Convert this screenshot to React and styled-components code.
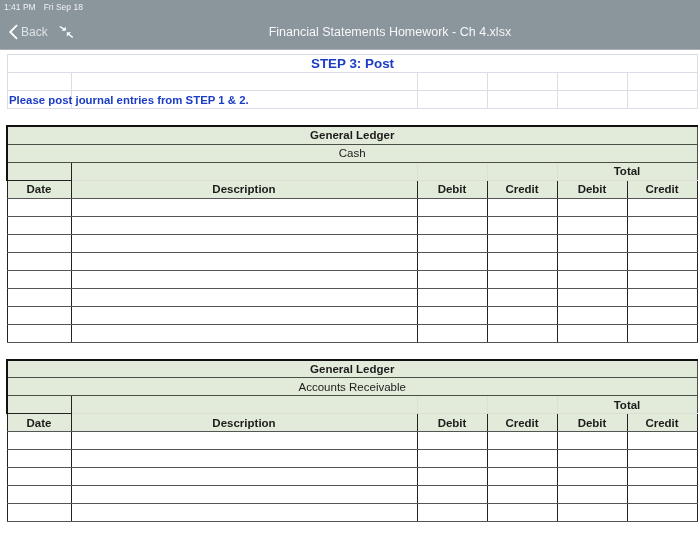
import React from 'react'
import styled, { createGlobalStyle } from 'styled-components'

const GlobalStyle = createGlobalStyle`
  html, body {
    margin: 0;
    padding: 0;
    background: #fff;
    font-family: 'Liberation Sans', Arial, sans-serif;
  }
`

const Page = styled.div`
  width: 700px;
  height: 534px;
  overflow: hidden;
  background: #fff;
  filter: blur(0.35px);
`
const Header = styled.header`
  height: 50px;
  background: #8b959c;
  border-bottom: 1px solid #a9b0b5;
  box-sizing: border-box;
  color: #fff;
`
const StatusBar = styled.div`
  height: 17px;
  padding: 1px 0 0 4px;
  box-sizing: border-box;
  font-size: 8.5px;
  line-height: 12px;
  color: #f1f3f4;
`
const StatusDate = styled.span`
  margin-left: 8px;
`
const NavBar = styled.div`
  display: flex;
  align-items: center;
  height: 30px;
  padding-left: 8px;
`
const BackLabel = styled.span`
  margin-left: 2px;
  font-size: 12px;
  color: #dfe3e5;
`
const Shrink = styled.svg`
  margin-left: 11px;
`
const Title = styled.div`
  margin-left: 195px;
  font-size: 12.5px;
  white-space: nowrap;
  color: #f6f7f8;
`
const Sheet = styled.main`
  padding: 4px 3px 0 6px;
`
const Grid = styled.table`
  width: 690px;
  table-layout: fixed;
  border-collapse: collapse;
  margin-left: ${(p) => (p.$ledger ? 0 : 1)}px;
  margin-bottom: ${(p) => p.$gap || 0}px;
  border-top: ${(p) => (p.$ledger ? '2px solid #111' : '1px solid #dcdde6')};
  tr {
    height: 18px;
  }
`
const Cell = styled.td`
  padding: 0;
  height: 18px;
  box-sizing: border-box;
  font-size: 11.5px;
  line-height: 14px;
  text-align: center;
  white-space: nowrap;
  color: #1c1c1c;
  border: 1px solid #dcdde6;
`
const NoteCell = styled(Cell)`
  padding-left: 1px;
  text-align: left;
  font-size: 11.4px;
  font-weight: bold;
  color: #1a3dc4;
`
const StepCell = styled(Cell)`
  font-size: 13.4px;
  font-weight: bold;
  color: #1a3dc4;
`
const BandCell = styled(Cell)`
  background: #e2ebd9;
  font-weight: ${(p) => (p.$bold ? 'bold' : 'normal')};
  border: 1px solid #4a4f48;
  border-left: ${(p) => (p.$thick ? '2px solid #111' : '1px solid #4a4f48')};
`
const SpacerCell = styled(Cell)`
  background: #e2ebd9;
  font-weight: bold;
  border: 1px solid #dcdfd8;
  border-top: 1px solid #4a4f48;
  border-left-color: ${(p) => (p.$darkLeft ? '#222' : '#dcdfd8')};
  border-right-color: ${(p) => (p.$end ? '#4a4f48' : '#dcdfd8')};
`
const CornerCell = styled(Cell)`
  background: #e2ebd9;
  border: 1px solid #222;
  border-left: 2px solid #111;
`
const HeadCell = styled(Cell)`
  background: #e2ebd9;
  font-weight: bold;
  border: 1px solid #222;
  border-bottom: 1px solid #555;
  border-top-color: ${(p) => (p.$lightTop ? '#dcdfd8' : '#222')};
`
const BodyCell = styled(Cell)`
  border: 1px solid #222;
  border-top-color: #555;
  border-bottom-color: #555;
`

const columns = [64, 346, 70, 70, 70, 70]

const Columns = () => (
  <colgroup>
    {columns.map((w, i) => (
      <col key={i} width={w} />
    ))}
  </colgroup>
)

const Ledger = ({ account, rows, gap }) => (
  <Grid $ledger $gap={gap}>
    <Columns />
    <tbody>
      <tr>
        <BandCell colSpan={6} $bold $thick>General Ledger</BandCell>
      </tr>
      <tr>
        <BandCell colSpan={6} $thick>{account}</BandCell>
      </tr>
      <tr>
        <CornerCell />
        <SpacerCell $darkLeft />
        <SpacerCell />
        <SpacerCell />
        <SpacerCell colSpan={2} $end>Total</SpacerCell>
      </tr>
      <tr>
        <HeadCell>Date</HeadCell>
        <HeadCell $lightTop>Description</HeadCell>
        <HeadCell $lightTop>Debit</HeadCell>
        <HeadCell $lightTop>Credit</HeadCell>
        <HeadCell $lightTop>Debit</HeadCell>
        <HeadCell $lightTop>Credit</HeadCell>
      </tr>
      {Array.from({ length: rows }).map((_, r) => (
        <tr key={r}>
          {columns.map((_, c) => (
            <BodyCell key={c} />
          ))}
        </tr>
      ))}
    </tbody>
  </Grid>
)

export default function App() {
  return (
    <Page>
      <GlobalStyle />
      <Header>
        <StatusBar>
          1:41 PM<StatusDate>Fri Sep 18</StatusDate>
        </StatusBar>
        <NavBar>
          <svg width="11" height="16" viewBox="0 0 11 16" fill="none">
            <path d="M9 1.2 2.2 8 9 14.8" stroke="#fff" strokeWidth="1.8" />
          </svg>
          <BackLabel>Back</BackLabel>
          <Shrink width="15" height="14" viewBox="0 0 15 14" fill="none">
            <path d="M0.8 1.5 5 4.2" stroke="#fff" strokeWidth="1.4" />
            <path d="M6.8 5.8H2.6L6.8 1.8Z" fill="#fff" />
            <path d="M13.8 12.5 9.6 9.2" stroke="#fff" strokeWidth="1.4" />
            <path d="M7.8 7.2H12L7.8 11.4Z" fill="#fff" />
          </Shrink>
          <Title>Financial Statements Homework - Ch 4.xlsx</Title>
        </NavBar>
      </Header>
      <Sheet>
        <Grid $gap={16}>
          <Columns />
          <tbody>
            <tr>
              <StepCell colSpan={6}>STEP 3: Post</StepCell>
            </tr>
            <tr>
              {columns.map((_, c) => (
                <Cell key={c} />
              ))}
            </tr>
            <tr>
              <NoteCell>Please post journal entries from STEP 1 &amp; 2.</NoteCell>
              {columns.slice(1).map((_, c) => (
                <Cell key={c} />
              ))}
            </tr>
          </tbody>
        </Grid>
        <Ledger account="Cash" rows={8} gap={16} />
        <Ledger account="Accounts Receivable" rows={5} />
      </Sheet>
    </Page>
  )
}
